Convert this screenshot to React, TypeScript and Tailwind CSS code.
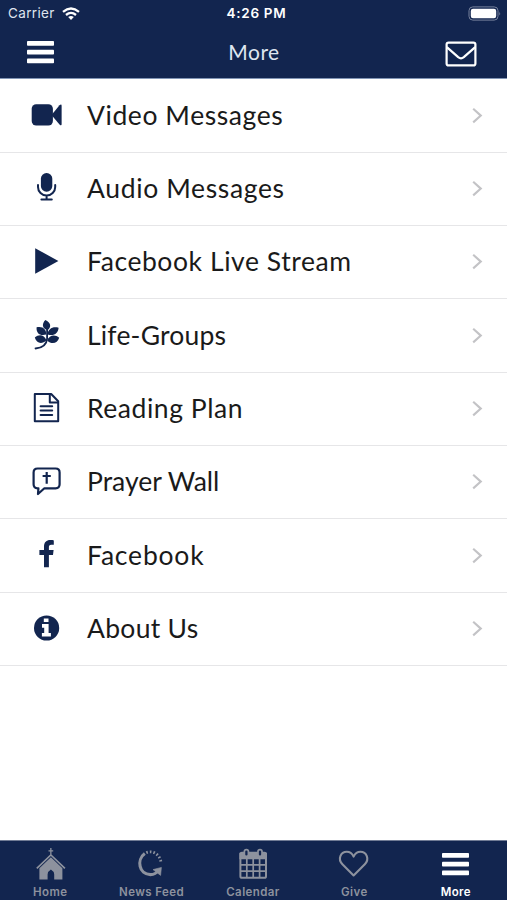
import React from 'react';

const VideoIcon = () => (
  <svg className="w-9 h-9" viewBox="0 0 36 36" fill="currentColor">
    <rect x="2.7" y="6.2" width="21.2" height="21.4" rx="4.5" />
    <path d="M22.5 16.9 30.5 7.3Q32.6 5.5 32.6 7.7v18.6q0 2-2.1.2z" />
  </svg>
);

const MicIcon = () => (
  <svg className="w-9 h-9" viewBox="0 0 36 36" fill="none" stroke="currentColor" strokeWidth="2" strokeLinecap="round">
    <rect x="11.9" y="2.1" width="11.4" height="18.6" rx="5.6" fill="currentColor" stroke="none" />
    <path d="M9 14v2a8.6 8.6 0 0 0 17.2 0v-2M17.6 24.7v3.6M12.4 28.6h10.4" />
  </svg>
);

const PlayIcon = () => (
  <svg className="w-9 h-9" viewBox="0 0 36 36" fill="currentColor">
    <path d="M6.2 4.2 29.4 17 6.2 29.7z" />
  </svg>
);

const LeafIcon = () => (
  <svg className="w-9 h-9" viewBox="0 0 36 36" fill="currentColor">
    <path d="M16.3 1.9c5.6 2.4 6.4 7 2.4 10.2-5.4-1.6-6.3-6-2.4-10.2z" />
    <path d="M7.6 9.2c6.2-1.4 10 2 9.6 7.4-6.2 1.8-10.2-1.6-9.6-7.4z" />
    <path d="M29.6 9.8c-6-1.6-10.6 1.2-11 6.6 6 2.2 10.6-.8 11-6.6z" />
    <path d="M5.8 19.6c4.4-4 9.4-2.8 11.6 2.6-4.2 4.4-10 3.4-11.6-2.6z" />
    <path d="M30.2 19.8c-4.4-4-9.8-2.8-12 2.6 4.2 4.4 10.2 3.4 12-2.6z" />
    <path d="M18.1 10v10.8q-.8 8.6-11.6 9.7" fill="none" stroke="currentColor" strokeWidth="1.8" strokeLinecap="round" />
  </svg>
);

const DocumentIcon = () => (
  <svg className="w-9 h-9" viewBox="0 0 36 36" fill="none" stroke="currentColor" strokeWidth="2" strokeLinejoin="round">
    <path d="M5.8 3h16.4l7 7.2v20H5.8z" />
    <path d="M20.8 3.2v8.2h8.2" />
    <path d="M11.6 15.3h11.6M11.6 19.6h11.6M11.6 23.9h11.6" strokeLinecap="round" />
  </svg>
);

const PrayerIcon = () => (
  <svg className="w-9 h-9" viewBox="0 0 36 36" fill="none" stroke="currentColor" strokeWidth="2.2" strokeLinejoin="round">
    <path d="M8.6 4.5h18q4 0 4 4v11.8q0 4-4 4H15.4L9 30l.4-5.7h-.8q-4 0-4-4V8.5q0-4 4-4z" />
    <path d="M17.7 8v11.8M13.6 12h8.2" />
  </svg>
);

const FacebookIcon = () => (
  <svg className="w-9 h-9" viewBox="0 0 36 36" fill="currentColor">
    <path d="M24.8 2.4v4.3h-2.5c-2 0-2.4 1-2.4 2.4v3h4.7l-.6 4.8h-4.1v12.4H15V16.9h-4.6v-4.8H15V8.5c0-4.1 2.5-6.4 6.2-6.4 1.7 0 3.2.1 3.6.3z" />
  </svg>
);

const InfoIcon = () => (
  <svg className="w-9 h-9" viewBox="0 0 36 36">
    <circle cx="17.6" cy="17" r="12.6" fill="currentColor" />
    <path d="M14.8 7.4h4.7v3.7h-4.7zM13 13.1h6.6v8.8h2.3v3.6h-9v-3.6h2.3v-5.2H13z" fill="#fff" />
  </svg>
);

const MenuIcon = () => (
  <svg className="w-[27px] h-[23px]" viewBox="0 0 27 23" fill="currentColor">
    <rect width="27" height="4.8" rx="0.8" />
    <rect y="8.7" width="27" height="4.8" rx="0.8" />
    <rect y="17.4" width="27" height="4.8" rx="0.8" />
  </svg>
);

const HomeIcon = () => (
  <svg className="w-9 h-9" viewBox="0 0 36 36" fill="currentColor">
    <path d="M18.2 2h1.3v2.2h1.7v1.2h-1.7v3l14 13.4-1.2 1.3L18.9 9.9 5.4 23.1l-1.2-1.3 14-13.4v-3h-1.7V4.2h1.7z" />
    <path d="M18.9 11.2 30.4 22.3v11.3h-8.2v-5.2q0-2.8-3.3-4.8-3.3 2-3.3 4.8v5.2H7.4V22.3z" />
  </svg>
);

const NewsIcon = () => (
  <svg className="w-9 h-9" viewBox="0 0 36 36" fill="none" stroke="currentColor">
    <path d="M10.8 7.6C2.4 13.6 4.9 28.6 16.4 28.6c3.8 0 6.3-1.6 7.9-4.1" strokeWidth="3.1" />
    <path d="M12.3 6.7C18.6 3.8 26 8.3 27 16.6" strokeWidth="2.8" strokeDasharray="1.6 2" />
    <path d="M19 23.6 27.4 21.4l-.8 8z" fill="currentColor" strokeWidth="0.6" />
  </svg>
);

const CalendarIcon = () => (
  <svg className="w-9 h-9" viewBox="0 0 36 36" fill="none" stroke="currentColor" strokeWidth="2">
    <rect x="5.4" y="6.8" width="25.6" height="25" rx="1.6" />
    <path d="M5.4 7.8H31v4.4H5.4z" fill="currentColor" />
    <path d="M5.4 18.8H31M5.4 25.2H31M11.8 12v19.6M18.2 12v19.6M24.6 12v19.6" strokeWidth="1.7" />
    <g className="fill-[#12254f]" strokeWidth="1.7">
      <rect x="9.4" y="3.6" width="4" height="6.8" rx="2" />
      <rect x="23" y="3.6" width="4" height="6.8" rx="2" />
    </g>
  </svg>
);

const HeartIcon = () => (
  <svg className="w-9 h-9" viewBox="0 0 36 36" fill="none" stroke="currentColor" strokeWidth="2.1" strokeLinejoin="round">
    <path d="M17.6 29.4 6.4 18.2C1.4 13 4.6 5.8 10.8 5.8c3.4 0 5.4 2 6.8 4.8 1.4-2.8 3.4-4.8 6.8-4.8 6.2 0 9.4 7.2 4.4 12.4z" />
  </svg>
);

const menuItems = [
  { label: 'Video Messages', icon: VideoIcon, tracking: 'tracking-[0.57px]' },
  { label: 'Audio Messages', icon: MicIcon, tracking: 'tracking-[0.64px]' },
  { label: 'Facebook Live Stream', icon: PlayIcon, tracking: 'tracking-[0.57px]' },
  { label: 'Life-Groups', icon: LeafIcon, tracking: 'tracking-[0.2px]' },
  { label: 'Reading Plan', icon: DocumentIcon, tracking: 'tracking-[0.55px]' },
  { label: 'Prayer Wall', icon: PrayerIcon, tracking: 'tracking-[0px]' },
  { label: 'Facebook', icon: FacebookIcon, tracking: 'tracking-[0.8px]' },
  { label: 'About Us', icon: InfoIcon, tracking: 'tracking-[0.3px]' },
];

const tabs = [
  { label: 'Home', icon: HomeIcon },
  { label: 'News Feed', icon: NewsIcon },
  { label: 'Calendar', icon: CalendarIcon },
  { label: 'Give', icon: HeartIcon },
  { label: 'More', icon: MenuIcon, active: true },
];

const StatusBar = () => (
  <div className="grid grid-cols-3 items-center h-[27px] px-2 font-['Inter',sans-serif]">
    <div className="flex items-center gap-[7px]">
      <span className="text-[13.5px] text-[#dfe4ee] tracking-[0.35px]">Carrier</span>
      <svg className="w-[18px] h-[13px]" viewBox="0 0 18 13" fill="none" stroke="currentColor" strokeWidth="2.3">
        <path d="M1 4.8q8-6.6 16 0M4 8q5-4.2 10 0" />
        <path d="M6.2 10.1q2.8-2.3 5.6 0L9 12.9z" fill="currentColor" stroke="none" />
      </svg>
    </div>
    <span className="text-center text-[13.5px] font-semibold tracking-[0.7px] pl-1.5">4:26 PM</span>
    <div className="flex justify-end -mr-[2px]">
      <svg className="w-[33px] h-[15px]" viewBox="0 0 33 15">
        <rect x="1" y="0.9" width="29" height="13.2" rx="3.8" fill="none" stroke="#77829d" strokeWidth="1" />
        <rect x="2.8" y="2.7" width="25.4" height="9.6" rx="2.2" fill="#fff" />
        <path d="M31.3 5.4q1.7 2.1 0 4.2z" fill="#77829d" />
      </svg>
    </div>
  </div>
);

const App = () => {
  return (
    <div className="flex flex-col w-[507px] h-[900px] overflow-hidden bg-white">
      <header className="h-[79px] shrink-0 bg-[#12254f] text-white border-b border-[#8195b5]">
        <StatusBar />
        <div className="grid grid-cols-3 items-center h-[51px] pl-[27px] pr-[30px]">
          <button aria-label="Menu">
            <MenuIcon />
          </button>
          <h1 className="text-center pl-1 pb-0.5 text-[21px] leading-none tracking-[0.5px] text-[#dfe6f0] font-['Lato',sans-serif]">More</h1>
          <button className="justify-self-end pt-[3px]" aria-label="Messages">
            <svg className="w-8 h-[26px]" viewBox="0 0 32 26" fill="none" stroke="currentColor" strokeWidth="2.2" strokeLinejoin="round">
              <rect x="1.6" y="1.6" width="28.8" height="22.8" rx="2" />
              <path d="M1.8 6.2 13.2 16.2q2.8 2.2 5.6 0L30.2 6.2" />
            </svg>
          </button>
        </div>
      </header>

      <main className="flex-1 pt-[0.6px]">
        {menuItems.map(({ label, icon: Icon, tracking }) => (
          <div key={label} className="flex items-center h-[73.3px] pl-[29px] pr-[23px] border-b border-[#e6e6e8]">
            <span className="text-[#12254f]">
              <Icon />
            </span>
            <span className={`flex-1 pl-[22px] pb-[1.4px] text-[26.5px] leading-none text-[#1a1a1a] font-['Lato',sans-serif] ${tracking}`}>
              {label}
            </span>
            <svg className="w-3 h-4" viewBox="0 0 12 16" fill="none" stroke="#c3c3c6" strokeWidth="2.1">
              <path d="M1.2.8 8.8 7.6l-7.6 6.8" />
            </svg>
          </div>
        ))}
      </main>

      <nav className="grid grid-cols-5 h-[60px] shrink-0 bg-[#12254f] border-t border-[#717c95]">
        {tabs.map(({ label, icon: Icon, active }) => (
          <div key={label} className={`flex flex-col items-center pt-[5px] ${active ? 'text-white' : 'text-[#8d929e]'}`}>
            <div className="h-9 flex items-center -ml-px">
              <Icon />
            </div>
            <span className="mt-[3px] -ml-px text-[11.5px] leading-[14px] font-semibold tracking-[0.4px] font-['Inter',sans-serif]">
              {label}
            </span>
          </div>
        ))}
      </nav>
    </div>
  );
};

export default App;
